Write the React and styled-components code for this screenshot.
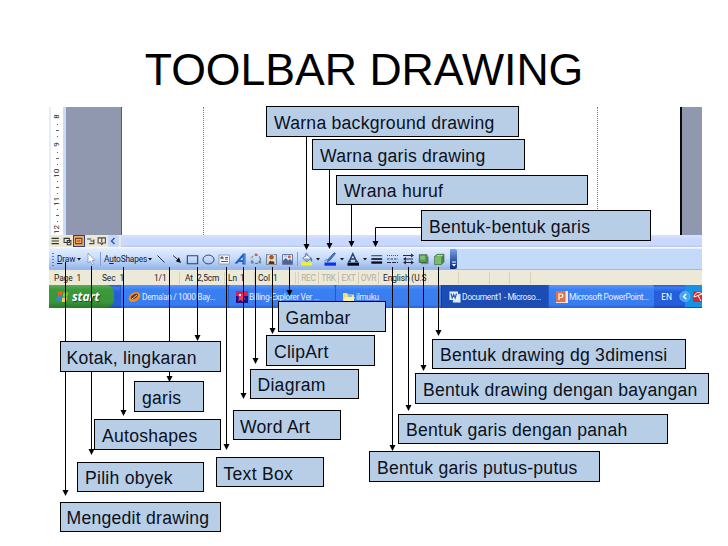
import React from "react";
import styled, { createGlobalStyle } from "styled-components";

const GlobalStyle = createGlobalStyle`
  body {
    margin: 0;
    background: #fff;
    overflow: hidden;
  }
  * {
    box-sizing: border-box;
  }
`;

// callouts sit freely on the slide: x, y, width, height, padding left and top
const labels = [
  { text: "Warna background drawing", x: 266, y: 106, w: 253, h: 31, pad: 7, top: 6 },
  { text: "Warna garis drawing", x: 312, y: 139, w: 213, h: 31, pad: 7, top: 6 },
  { text: "Wrana huruf", x: 336, y: 175, w: 252, h: 30, pad: 7, top: 5 },
  { text: "Bentuk-bentuk garis", x: 421, y: 210, w: 230, h: 31, pad: 7, top: 6 },
  { text: "Gambar", x: 278, y: 301, w: 108, h: 31, pad: 6.5, top: 6 },
  { text: "ClipArt", x: 266, y: 335, w: 109, h: 31, pad: 7, top: 6 },
  { text: "Kotak, lingkaran", x: 60, y: 341, w: 161, h: 31, pad: 5.5, top: 6 },
  { text: "garis", x: 134, y: 381, w: 70, h: 31, pad: 7, top: 6 },
  { text: "Diagram", x: 250, y: 369, w: 109, h: 30, pad: 6.5, top: 5 },
  { text: "Autoshapes", x: 94, y: 419, w: 127, h: 31, pad: 7, top: 6 },
  { text: "Word Art", x: 233, y: 410, w: 108, h: 30, pad: 6, top: 6 },
  { text: "Pilih obyek", x: 77, y: 462, w: 127, h: 30, pad: 7, top: 5 },
  { text: "Text Box", x: 216, y: 457, w: 108, h: 30, pad: 6.5, top: 6 },
  { text: "Mengedit drawing", x: 60, y: 502, w: 161, h: 30, pad: 5.5, top: 5 },
  { text: "Bentuk drawing dg 3dimensi", x: 432, y: 339, w: 254, h: 30, pad: 7, top: 5 },
  { text: "Bentuk drawing dengan bayangan", x: 415, y: 373, w: 294, h: 31, pad: 7, top: 6 },
  { text: "Bentuk garis dengan panah", x: 398, y: 414, w: 270, h: 30, pad: 7, top: 5 },
  { text: "Bentuk garis putus-putus", x: 369, y: 451, w: 231, h: 31, pad: 7, top: 6 },
];

// [x, from, tip]
const arrows = [
  [65.5, 262, 496],
  [91.5, 266, 455],
  [123.5, 267, 416],
  [169.5, 267, 382],
  [197.5, 267, 341],
  [226.5, 267, 450],
  [243.5, 267, 399],
  [255.5, 267, 364],
  [272.5, 267, 334],
  [289.5, 267, 296],
  [306.5, 137, 250],
  [329.5, 170, 249],
  [351.5, 205, 247],
  [392.5, 267, 451],
  [408.5, 267, 411],
  [423.5, 267, 371],
  [438.5, 267, 336],
];

const Icon = ({ children, w = 16 }) => (
  <Glyph width={w} height="16" viewBox="0 0 16 16" fill="none">
    {children}
  </Glyph>
);

const Caret = ({ w }) => (
  <CaretBox $w={w}>
    <svg width="4" height="3" viewBox="0 0 4 3">
      <path d="M0 0h4L2 2.6z" fill="#111" />
    </svg>
  </CaretBox>
);

const DrawToolbar = () => (
  <ToolRow>
    <Tools>
      <Grip />
      <ToolText $w={20}>
        <u>D</u>raw
      </ToolText>
      <Caret w={6} />
      <Icon>
        <path d="M6 2v10l2.4-2 1.6 3.6 1.6-.7L10 9.4h3z" fill="#fff" stroke="#8494b2" strokeWidth=".8" />
      </Icon>
      <Separator $w={5} />
      <ToolText $w={43}>
        A<u>u</u>toShapes
      </ToolText>
      <Caret w={7} />
      <Icon>
        <path d="M4.5 4.5l7 7" stroke="#26344d" />
      </Icon>
      <Icon>
        <path d="M4 4.5l6 5" stroke="#26344d" />
        <path d="M12 12L6.8 10.3l3.2-4z" fill="#111" />
      </Icon>
      <Icon w={15}>
        <path d="M2.5 4.5h11v8.5h-11z" stroke="#34425e" strokeWidth="1.2" />
      </Icon>
      <Icon>
        <ellipse cx="8.5" cy="8.5" rx="5.5" ry="4.4" stroke="#34425e" strokeWidth="1" />
      </Icon>
      <Icon>
        <path d="M3 4h10.5v9H3z" fill="#f5f8ff" stroke="#8c9ab4" strokeWidth=".9" />
        <path d="M5 8.2V6h2v2.2M5 7h2M9 6.5h3M9 8.2h3M5 10.5h7" stroke="#333" strokeWidth=".8" />
      </Icon>
      <Icon>
        <path d="M2.5 12.5L11 2.5h2.5v11h-3.2v-2.600H7L5 12.8z" fill="#2360c4" />
        <path d="M8.3 9l2.2-2.7V9z" fill="#e7f1ff" />
        <path d="M12.2 3.5v9" stroke="#75b0f5" strokeWidth=".7" />
      </Icon>
      <Icon w={15}>
        <circle cx="8.5" cy="8.2" r="4.6" stroke="#42516e" strokeDasharray="3 2" />
        <circle cx="8.5" cy="3.5" r="1.5" fill="#bd684d" />
        <circle cx="4.5" cy="11.5" r="1.6" fill="#6684bd" />
        <circle cx="12.6" cy="11.2" r="1.6" fill="#5e9a61" />
        <circle cx="4" cy="6.4" r="1.3" fill="#d9b95a" />
      </Icon>
      <Icon>
        <path d="M3.5 3.5h10v10h-10z" fill="#cdd6e9" stroke="#6a768f" strokeWidth=".9" />
        <path d="M5.5 3.5h6v10h-6z" fill="#f2dfb4" />
        <circle cx="8.5" cy="6.2" r="2.2" fill="#a75525" />
        <path d="M5.5 13.2c0-5 6-5 6 0z" fill="#49302a" />
        <path d="M8 9l1 2 .8-2z" fill="#fff" />
      </Icon>
      <Icon>
        <path d="M3.5 3.5h10v10h-10z" fill="#dfe8f7" stroke="#5e6f91" strokeWidth=".9" />
        <path d="M4 13v-3.3L6.8 7l2.4 2.6L11 8l2.2 2.3V13z" fill="#4b6495" />
        <circle cx="10.4" cy="5.8" r="1.5" fill="#c66444" />
        <path d="M5 5h3" stroke="#92a9d4" />
      </Icon>
      <Separator $w={4} />
      <Icon w={15}>
        <path d="M4 7.3L8.4 3l4.3 4.2L8.4 11z" fill="#eef4ff" stroke="#53698b" strokeWidth=".9" />
        <path d="M5 7.5h6.8l-3.4 3z" fill="#8aa4c7" />
        <path d="M6.8 6V2.4c0-1 2-1 2 0V5" stroke="#53698b" strokeWidth=".7" />
        <path d="M12 6c2.6 1 2.4 2.8 1.8 5-1.4-1-2.1-2.6-1.8-5z" fill="#4677be" />
        <path d="M2.5 11.5h11.5v3.3H2.5z" fill="#f4f325" />
      </Icon>
      <Caret w={8} />
      <Icon>
        <path d="M13.5 2.5L8 9.3l-3 1.7 1.4-3 5.6-6.2z" fill="#4778cb" stroke="#315a9e" strokeWidth=".8" />
        <path d="M2.5 10.2c1.5-2 2.6-2 3.8-1" stroke="#55709c" />
        <path d="M2.5 11.5h11.5v3.2H2.5z" fill="#0a32ef" />
      </Icon>
      <Caret w={7} />
      <Icon>
        <path d="M4.2 10.6L7.8 2.6l3.8 8M5.6 8h4.8M3 10.5h3M10 10.5h3" stroke="#294477" strokeWidth="1.4" />
        <path d="M2.5 11.6h11.5v3.1H2.5z" fill="#080b12" />
      </Icon>
      <Caret w={8} />
      <Icon w={15}>
        <path d="M2.5 4.5h11.5" stroke="#222d42" />
        <path d="M2.5 8h11.5" stroke="#111827" strokeWidth="1.8" />
        <path d="M2.5 11.8h11.5" stroke="#05070c" strokeWidth="2.4" />
      </Icon>
      <Icon>
        <path d="M3 4.5h11" stroke="#4a5770" strokeDasharray="1 1" />
        <path d="M3 8h11" stroke="#35425b" strokeDasharray="2.5 1" />
        <path d="M3 11.5h11" stroke="#222d42" strokeDasharray="4 1" />
      </Icon>
      <Icon>
        <path d="M3 4.5h9M4 8h9M4 11.5h9" stroke="#222d42" strokeWidth="1.1" />
        <path d="M11 2.4l3 2.1-3 2.1zM6 5.9L3 8l3 2.1zM11 9.4l3 2.1-3 2.1zM6 9.4l-3 2.1 3 2.1z" fill="#222d42" />
      </Icon>
      <Icon w={15}>
        <path d="M5.5 5.5h8v8h-8z" fill="#7888a0" />
        <path d="M3.5 3.5h8.2v8.2H3.5z" fill="#58a04e" stroke="#36613a" strokeWidth=".9" />
        <path d="M4.5 4.5h5v4h-5z" fill="#86bf76" />
      </Icon>
      <Icon>
        <path d="M3.5 5.5l2.6-2.2H13v7.8l-2.5 2.4h-7z" fill="#438846" stroke="#397541" strokeWidth=".7" />
        <path d="M3.8 6h6.5v7.1H3.8z" fill="#7fb96e" />
        <path d="M4.4 5.4l2-1.5h6L10.5 5.4z" fill="#b0dd9c" />
      </Icon>
    </Tools>
    <OptionsCap>
      <svg width="6" height="7" viewBox="0 0 6 7">
        <path d="M1 1h4" stroke="#fff" />
        <path d="M1 3h4L3 5.5z" fill="#fff" />
      </svg>
    </OptionsCap>
  </ToolRow>
);

const StatusBar = () => (
  <Status>
    <Cell $w={131} $pad={5}>
      <Txt $w={48}>Page&nbsp; 1</Txt>
      <Txt $w={52}>Sec&nbsp; 1</Txt>
      <Txt>1/1</Txt>
    </Cell>
    <Cell $w={45} $pad={5}>
      <Txt $w={12}>At</Txt>
      <Txt>2,5cm</Txt>
    </Cell>
    <Cell $w={30} $pad={3}>
      <Txt $w={12}>Ln</Txt>
      <Txt>1</Txt>
    </Cell>
    <Cell $w={41} $pad={3}>
      <Txt $w={15}>Col</Txt>
      <Txt>1</Txt>
    </Cell>
    <Cell $w={3} />
    <Mode>REC</Mode>
    <Mode>TRK</Mode>
    <Mode>EXT</Mode>
    <Mode>OVR</Mode>
    <Cell $w={47} $pad={4}>
      <Txt>English (U.S</Txt>
    </Cell>
    <Cell $w={33} />
    <Cell $w={31} />
    <Cell $w={20} />
    <Cell $w={21} />
  </Status>
);

const Taskbar = () => (
  <Tasks>
    <Start>
      <svg width="14" height="13" viewBox="0 0 14 13">
        <path d="M2.4 1.6C4 .6 5.3.7 6.7 1.6L5.8 5.8C4.4 5 3 5 1.4 5.8z" fill="#ee5a29" />
        <path d="M7.6 2c1.5.8 3 .8 4.8 0l-1 4.2c-1.8.8-3.2.8-4.7 0z" fill="#85c840" />
        <path d="M1.2 6.7c1.6-.9 3-.8 4.4 0l-1 4.2C3.2 10.2 1.8 10.2.2 11z" fill="#3f82ee" />
        <path d="M6.5 7.2c1.5.8 3 .8 4.7 0l-1 4.2c-1.8.8-3.2.8-4.7 0z" fill="#f9cf3e" />
      </svg>
      start
    </Start>
    <Task $w={108}>
      <svg width="13" height="12" viewBox="0 0 13 12">
        <ellipse cx="6.5" cy="6" rx="6.3" ry="4.4" transform="rotate(-32 6.5 6)" fill="#ef8d28" />
        <ellipse cx="6.7" cy="5.5" rx="4" ry="2" transform="rotate(-32 6.5 6)" fill="#663725" />
        <path d="M4 8l5-4" stroke="#f6c37c" />
      </svg>
      Dema'an / 1000 Bay...
    </Task>
    <Task $w={107}>
      <svg width="12" height="12" viewBox="0 0 12 12">
        <path d="M0 0h12v12H0z" fill="#17148c" />
        <path d="M0 0h12v5H0z" fill="#e81855" />
        <path d="M2 3l3 2 2-3v5l3 1-3 1v2L5 9 2 10l1-3z" fill="#f13668" />
        <path d="M3 3h2v2H3z" fill="#fff" />
      </svg>
      Billing-Explorer Ver ...
    </Task>
    <Task $w={106}>
      <svg width="12" height="12" viewBox="0 0 12 12">
        <path d="M0 2h4l1 1.5h6V11H0z" fill="#f5da7b" />
        <path d="M5 3h4v4H5z" fill="#8cb5d4" />
        <path d="M2 6h9.8L10 11.5H0z" fill="#fff0a8" />
      </svg>
      ilmuku
    </Task>
    <Task $w={107} $active>
      <svg width="12" height="12" viewBox="0 0 12 12">
        <path d="M4 3h7.5v8.5H4z" fill="#dfeaff" stroke="#7fa5e0" strokeWidth=".6" />
        <path d="M.5.5h8.5V9H.5z" fill="#e9f1ff" />
        <path d="M2 2.5l1.2 4.5 1.5-3.5L6.2 7l1.3-4.5" stroke="#2861b6" strokeWidth="1.2" fill="none" />
      </svg>
      Document1 - Microso...
    </Task>
    <Task $w={106}>
      <svg width="12" height="12" viewBox="0 0 12 12">
        <path d="M0 0h12v12H0z" fill="#f7e3d9" />
        <path d="M0 0h9.5v11H0z" fill="#dc734c" />
        <path d="M3 9V3h2.5a1.8 1.8 0 010 3.5H3" stroke="#fff" strokeWidth="1.2" fill="none" />
      </svg>
      Microsoft PowerPoint...
    </Task>
    <Lang>EN</Lang>
    <Tray>
      <svg width="23" height="22" viewBox="0 0 23 22">
        <path d="M6 0h17v22H6z" fill="#1591e5" />
        <circle cx="5.8" cy="11.5" r="5" fill="#3aa2f1" stroke="#82c8fa" strokeWidth=".7" />
        <path d="M7.3 8.8L4.6 11.5l2.7 2.7" stroke="#fff" strokeWidth="1.5" fill="none" />
        <path d="M14.5 6.5h9v10.5h-9l-1-5z" fill="#d42a2c" />
        <path d="M15 12c1-5 5.5-5.5 8-3l-8 3zM19 10.5l3 5.5" stroke="#fff" strokeWidth="1" fill="none" />
      </svg>
    </Tray>
  </Tasks>
);

const Document = () => (
  <Doc>
    <Ruler>
      {["8", "9", "10", "11", "12"].map((n) => (
        <Mark key={n}>
          <Num>{n}</Num>
          {n !== "12" && (
            <>
              <Tick $w={1} />
              <Tick $w={3} />
              <Tick $w={1} />
            </>
          )}
        </Mark>
      ))}
    </Ruler>
    <Desk $w={55} />
    <Page>
      <Margin $w={82} />
      <Margin $w={394} />
    </Page>
    <Desk $w={20} />
  </Doc>
);

const App = () => {
  return (
    <>
      <GlobalStyle />
      <Slide>
        <Title>TOOLBAR DRAWING</Title>
        <Capture>
          <Document />
          <ScrollRow>
            <Views>
              <ViewButton>
                <path d="M1.5 3h7M1.5 5.5h7M1.5 8h7" stroke="#333" />
              </ViewButton>
              <ViewButton>
                <path d="M2 3h5v4H2zM5 5h3.5v4H5z" stroke="#333" fill="none" />
              </ViewButton>
              <ViewButton $on>
                <path d="M2.5 3h6v5h-6zM4 5.5h3" stroke="#6d4528" fill="none" />
              </ViewButton>
              <ViewButton>
                <path d="M2 3.5h4M5 5.5h3.5M4 8h4.5V4" stroke="#444" fill="none" />
              </ViewButton>
              <ViewButton>
                <path d="M2 2.5h3l.5.5.5-.5h3v5H6.5L5.5 9l-1-1.5H2zM5.5 3v4" stroke="#444" fill="none" />
              </ViewButton>
            </Views>
            <ScrollLeft>
              <svg width="6" height="8" viewBox="0 0 6 8">
                <path d="M4.5 1L1.5 4l3 3" stroke="#3c5c94" strokeWidth="1.5" fill="none" />
              </svg>
            </ScrollLeft>
            <Track />
          </ScrollRow>
          <DrawToolbar />
          <StatusBar />
          <Taskbar />
        </Capture>
        <Lines width="728" height="546">
          {arrows.map(([x, from, tip]) => (
            <g key={x}>
              <path d={`M${x} ${from}V${tip - 4}`} stroke="#000" />
              <path d={`M${x - 3} ${tip - 6}h6l-3 6z`} />
            </g>
          ))}
          <path d="M421 227.5H375.5V243" stroke="#000" fill="none" />
          <path d="M372.5 241h6l-3 6z" />
        </Lines>
        {labels.map((l) => (
          <Label key={l.text} $x={l.x} $y={l.y} $w={l.w} $h={l.h} $pad={l.pad} $top={l.top}>
            {l.text}
          </Label>
        ))}
      </Slide>
    </>
  );
};

const Slide = styled.div`
  position: relative;
  width: 728px;
  height: 546px;
  background: #fff;
  font-family: "Liberation Sans", Arial, sans-serif;
  overflow: hidden;
`;

const Title = styled.h1`
  margin: 0;
  height: 107px;
  padding: 44px 0 0 0;
  text-align: center;
  font-size: 44.6px;
  line-height: 51px;
  font-weight: 400;
  color: #000;
  white-space: nowrap;
`;

const Label = styled.div`
  position: absolute;
  left: ${(p) => p.$x}px;
  top: ${(p) => p.$y}px;
  width: ${(p) => p.$w}px;
  height: ${(p) => p.$h}px;
  padding: ${(p) => p.$top}px 0 0 ${(p) => p.$pad}px;
  border: 1px solid #000;
  background: #b8cee7;
  color: #0b111b;
  font-size: 17.6px;
  line-height: 20px;
  letter-spacing: 0.25px;
  white-space: nowrap;
`;

const Lines = styled.svg`
  position: absolute;
  left: 0;
  top: 0;
`;

const Capture = styled.div`
  width: 653px;
  height: 201px;
  margin-left: 49px;
  display: flex;
  flex-direction: column;
  overflow: hidden;
  font-family: Roboto, "Open Sans", sans-serif;
  font-size: 8.4px;
  letter-spacing: -0.1px;
  color: #222;
`;

const Doc = styled.div`
  display: flex;
  height: 128px;
`;

const Ruler = styled.div`
  width: 17px;
  display: flex;
  flex-direction: column;
  padding-top: 4px;
  background: #fff;
  border-left: 2px solid #e5edfb;
  border-right: 3px solid #c9dcf8;
`;

const Mark = styled.div`
  height: 28.3px;
  display: flex;
  flex-direction: column;
  align-items: center;

  &:last-child {
    height: 11px;
  }
`;

const Num = styled.span`
  height: 12px;
  writing-mode: vertical-rl;
  transform: rotate(180deg);
  text-align: center;
  font-size: 8px;
  line-height: 10px;
`;

const Tick = styled.i`
  width: ${(p) => p.$w}px;
  height: 1px;
  margin: 2.5px 0;
  background: #666;
`;

const Desk = styled.div`
  width: ${(p) => p.$w}px;
  background: #9098af;
`;

const Page = styled.div`
  flex: 1;
  display: flex;
  background: #fff;
  border-left: 1px solid #555d73;
  border-right: 2px solid #0a0a0e;
`;

const Margin = styled.div`
  width: ${(p) => p.$w}px;
  border-right: 1px dotted #808080;
`;

const ScrollRow = styled.div`
  display: flex;
  height: 13px;
  background: #ece9d8;
  border-bottom: 1px solid #f5f7fc;
`;

const Views = styled.div`
  display: flex;
  padding-left: 1px;
`;

const ViewButton = styled.svg.attrs({ width: 11.5, height: 12, viewBox: "0 0 11 11" })`
  background: ${(p) => (p.$on ? "#f3a765" : "transparent")};
  outline: ${(p) => (p.$on ? "1px solid #35427a" : "none")};
  outline-offset: -1px;
`;

const ScrollLeft = styled.div`
  width: 11px;
  display: flex;
  align-items: center;
  justify-content: center;
  background: #c5d7fb;
  border-radius: 2px;
`;

const Track = styled.div`
  flex: 1;
  margin-left: 2px;
  background: linear-gradient(#d7e1ff, #c8d7fd 40%, #cbd9fd 80%, #b6c6ee);
`;

const ToolRow = styled.div`
  display: flex;
  height: 22px;
  background: #c3daf9;
  border-top: 1px solid #e7f0fe;
  border-bottom: 1px solid #9db7e2;
`;

const Tools = styled.div`
  width: 401px;
  display: flex;
  align-items: center;
  background: linear-gradient(#e0ecfe, #c8dcfb 45%, #94b6ea);
`;

const Grip = styled.div`
  width: 2px;
  height: 13px;
  margin: 0 2px 0 3px;
  background: repeating-linear-gradient(#5c7fbc 0 1.5px, transparent 1.5px 3px);
`;

const ToolText = styled.span`
  width: ${(p) => p.$w}px;
  flex: none;
  padding-left: 1px;
  letter-spacing: -0.2px;
  white-space: nowrap;
  color: #15213a;
`;

const CaretBox = styled.span`
  width: ${(p) => p.$w}px;
  flex: none;
  display: flex;
  justify-content: center;
`;

const Glyph = styled.svg`
  flex: none;
`;

const Separator = styled.div`
  width: ${(p) => p.$w}px;
  height: 14px;
  flex: none;
  background: linear-gradient(90deg, transparent 2px, #7f9fd4 2px 3px, transparent 3px);
`;

const OptionsCap = styled.div`
  width: 7px;
  display: flex;
  align-items: flex-end;
  justify-content: center;
  padding-bottom: 1px;
  background: linear-gradient(#7ba2e4, #2c55a8 60%, #0d2f85);
  border-radius: 0 2px 2px 0;
`;

const Status = styled.div`
  display: flex;
  align-items: center;
  height: 15px;
  background: #ece9d8;
`;

const Cell = styled.div`
  width: ${(p) => p.$w}px;
  height: 12px;
  flex: none;
  display: flex;
  align-items: center;
  padding-left: ${(p) => p.$pad || 0}px;
  border-right: 1px solid #d6d2bd;
`;

const Txt = styled.span`
  width: ${(p) => (p.$w ? `${p.$w}px` : "auto")};
  flex: none;
  white-space: nowrap;
`;

const Mode = styled.div`
  width: 20px;
  height: 12px;
  flex: none;
  display: flex;
  align-items: center;
  justify-content: center;
  border-right: 1px solid #d0ccb8;
  color: #b3b09f;
  letter-spacing: -0.3px;
`;

const Tasks = styled.div`
  display: flex;
  align-items: stretch;
  height: 23px;
  background: linear-gradient(#2a5fd2, #3b7cf0 12%, #245edb 30%, #245edb 85%, #1c48b4);
`;

const Start = styled.div`
  width: 65px;
  margin-right: 6px;
  display: flex;
  align-items: center;
  gap: 2px;
  padding-left: 7px;
  border-radius: 0 8px 8px 0;
  background: linear-gradient(#5eac56, #3c9a3b 20%, #38953a 75%, #28762c);
  color: #fff;
  font: italic 700 12px "Open Sans", sans-serif;
  text-shadow: 1px 1px 1px #1d4f1d;
`;

const Task = styled.div`
  width: ${(p) => p.$w}px;
  flex: none;
  display: flex;
  align-items: center;
  gap: 1px;
  padding-left: 7px;
  border-left: 1px solid ${(p) => (p.$active ? "#123a95" : "#2459c8")};
  border-radius: 2px;
  background: ${(p) =>
    p.$active ? "#1b4db5" : "linear-gradient(#5b97fb, #3b80f3 20%, #387cf0 85%, #2a62d2)"};
  color: #e6efff;
  letter-spacing: -0.35px;
  white-space: nowrap;

  svg {
    flex: none;
  }
`;

const Lang = styled.div`
  flex: 1;
  display: flex;
  align-items: center;
  justify-content: center;
  color: #fff;
`;

const Tray = styled.div`
  width: 23px;
  display: flex;
`;

export default App;
